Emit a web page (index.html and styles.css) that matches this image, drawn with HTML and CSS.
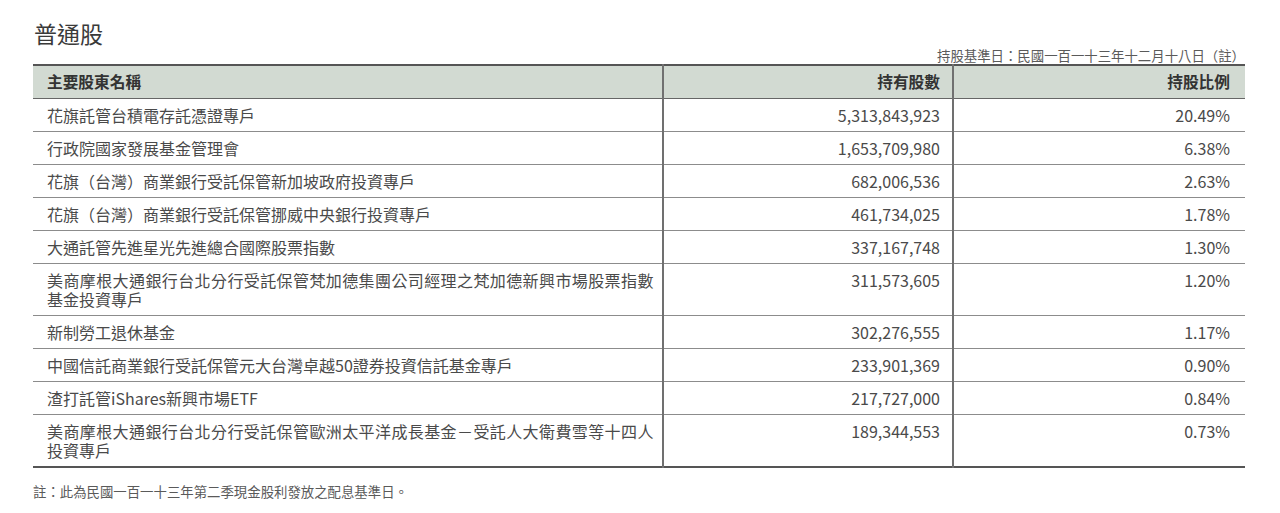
FILE: index.html
```html
<!DOCTYPE html>
<html lang="zh-Hant">
<head>
<meta charset="utf-8">
<link rel="stylesheet" href="styles.css">
</head>
<body>
<div class="page">
  <h1 class="title">普通股</h1>
  <div class="basis">持股基準日：民國一百一十三年十二月十八日（註）</div>
  <table class="holders">
    <colgroup><col class="c1"><col class="c2"><col class="c3"></colgroup>
    <thead>
      <tr><th class="name">主要股東名稱</th><th class="num">持有股數</th><th class="num pct">持股比例</th></tr>
    </thead>
    <tbody>
      <tr><td class="name">花旗託管台積電存託憑證專戶</td><td class="num">5,313,843,923</td><td class="num pct">20.49%</td></tr>
      <tr><td class="name">行政院國家發展基金管理會</td><td class="num">1,653,709,980</td><td class="num pct">6.38%</td></tr>
      <tr><td class="name">花旗（台灣）商業銀行受託保管新加坡政府投資專戶</td><td class="num">682,006,536</td><td class="num pct">2.63%</td></tr>
      <tr><td class="name">花旗（台灣）商業銀行受託保管挪威中央銀行投資專戶</td><td class="num">461,734,025</td><td class="num pct">1.78%</td></tr>
      <tr><td class="name">大通託管先進星光先進總合國際股票指數</td><td class="num">337,167,748</td><td class="num pct">1.30%</td></tr>
      <tr><td class="name"><span class="wide">美商摩根大通銀行台北分行受託保管梵加德集團公司經理之梵加德新興市場股票指數</span><br>基金投資專戶</td><td class="num">311,573,605</td><td class="num pct">1.20%</td></tr>
      <tr><td class="name">新制勞工退休基金</td><td class="num">302,276,555</td><td class="num pct">1.17%</td></tr>
      <tr><td class="name">中國信託商業銀行受託保管元大台灣卓越50證券投資信託基金專戶</td><td class="num">233,901,369</td><td class="num pct">0.90%</td></tr>
      <tr><td class="name">渣打託管iShares新興市場ETF</td><td class="num">217,727,000</td><td class="num pct">0.84%</td></tr>
      <tr><td class="name"><span class="wide">美商摩根大通銀行台北分行受託保管歐洲太平洋成長基金－受託人大衛費雪等十四人</span><br>投資專戶</td><td class="num">189,344,553</td><td class="num pct">0.73%</td></tr>
    </tbody>
  </table>
  <p class="note">註：此為民國一百一十三年第二季現金股利發放之配息基準日。</p>
</div>
</body>
</html>
```
FILE: styles.css
```css
html, body {
  margin: 0;
  padding: 0;
  background: #ffffff;
}
body {
  font-family: "Noto Sans CJK TC", "Noto Sans", sans-serif;
  color: #4a4a4a;
}
.page {
  padding: 18px 35px 0 33px;
  width: 1212px;
}
.title {
  margin: 0 0 0 1px;
  font-size: 23px;
  line-height: 30px;
  font-weight: 400;
  color: #3a3a3a;
}
.basis {
  text-align: right;
  font-size: 13.4px;
  line-height: 17px;
  margin: -1px 0 0 0;
  color: #5a5a5a;
}
.holders {
  width: 1212px;
  border-collapse: collapse;
  table-layout: fixed;
  border-top: 2px solid #555;
  border-bottom: 2px solid #555;
}
.c1 { width: 630px; }
.c2 { width: 290px; }
.c3 { width: 292px; }
.holders th {
  background: #d2dad2;
  font-size: 15.7px;
  font-weight: 700;
  color: #333;
  line-height: 18px;
  padding: 7px 12px 7px 14px;
  border-bottom: 1.5px solid #666;
}
.holders td {
  font-size: 16px;
  line-height: 19px;
  padding: 6.5px 12px 6.5px 14px;
  border-bottom: 1.5px solid #8c8c8c;
  vertical-align: top;
}
.holders td.name { white-space: nowrap; padding-right: 4px; }
.wide { letter-spacing: 0.4px; }
.holders tr > :nth-child(2) {
  border-left: 2px solid #707070;
  border-right: 2px solid #707070;
}
.name { text-align: left; }
.num { text-align: right; }
.pct { padding-right: 15px !important; }
.note {
  margin: 15px 0 0 0;
  font-size: 13.4px;
  line-height: 17px;
  color: #5a5a5a;
}
```
